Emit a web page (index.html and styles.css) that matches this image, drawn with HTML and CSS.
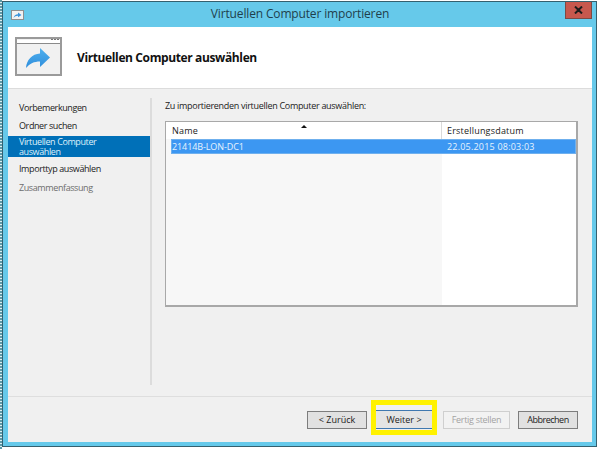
FILE: index.html
```html
<!DOCTYPE html>
<html lang="de">
<head>
<meta charset="utf-8">
<title>Virtuellen Computer importieren</title>
<link rel="stylesheet" href="styles.css">
</head>
<body>
<div class="desktop">
  <div class="window">
    <div class="titlebar">
      <svg class="title-icon" width="13" height="10" viewBox="0 0 13 10"><rect x="0.5" y="0.5" width="12" height="9" fill="#f2f2f2" stroke="#8f8f8f"/><path d="M2.500 8c.5-2.500 2-3.800 4.500-3.800V2.500L10.500 5 7 7.300V5.800C5 5.800 3.600 6.600 2.500 8z" fill="#3a94dc"/></svg>
      <span class="title-text">Virtuellen Computer importieren</span>
      <div class="close">
        <svg width="9" height="8" viewBox="0 0 9 8"><path d="M1 0.500 4.500 4M8 0.500 4.500 4M1 7.500 4.500 4M8 7.500 4.500 4" stroke="#1c1c1c" stroke-width="2"/></svg>
      </div>
    </div>
    <div class="client">
      <header class="header">
        <svg class="header-icon" width="47" height="39" viewBox="0 0 47 39">
          <defs><linearGradient id="arrow" x1="0" y1="0" x2="0" y2="1"><stop offset="0" stop-color="#4fb0ee"/><stop offset="1" stop-color="#2f8edc"/></linearGradient></defs>
          <rect x="1" y="1" width="45" height="37" fill="#f1f1f1" stroke="#9a9a9a" stroke-width="2"/>
          <rect x="2" y="3" width="43" height="3" fill="#fff"/>
          <path d="M2 6.500H45" stroke="#8a8a8a"/>
          <path d="M36 2.500h2M39 2.500h2M42 2.500h2" stroke="#777"/>
          <path d="M11 31C11.500 23 17 17 25 16.500V11L35 20.500 25 30V24.500C19 24.500 15 26.500 11 31z" fill="url(#arrow)"/>
        </svg>
        <h1 class="header-title">Virtuellen Computer auswählen</h1>
      </header>
      <div class="middle">
        <nav class="nav">
          <div class="nav-item">Vorbemerkungen</div>
          <div class="nav-item">Ordner suchen</div>
          <div class="nav-item nav-active">Virtuellen Computer auswählen</div>
          <div class="nav-item">Importtyp auswählen</div>
          <div class="nav-item nav-muted">Zusammenfassung</div>
        </nav>
        <main class="content">
          <p class="prompt">Zu importierenden virtuellen Computer auswählen:</p>
          <div class="list">
            <div class="list-head">
              <div class="col-name">Name<span class="sort"></span></div>
              <div class="col-date">Erstellungsdatum</div>
            </div>
            <div class="list-row">
              <div class="cell-name">21414B-LON-DC1</div>
              <div class="cell-date">22.05.2015 08:03:03</div>
            </div>
            <div class="list-fill">
              <div class="fill-name"></div>
              <div class="fill-date"></div>
            </div>
          </div>
        </main>
      </div>
      <footer class="footer">
        <button class="btn btn-back">&lt; Zurück</button>
        <div class="highlight"><button class="btn btn-next">Weiter &gt;</button></div>
        <button class="btn btn-disabled">Fertig stellen</button>
        <button class="btn btn-cancel">Abbrechen</button>
      </footer>
    </div>
  </div>
</div>
</body>
</html>
```
FILE: styles.css
```css
* { box-sizing: border-box; }
html, body { margin: 0; padding: 0; }
body { width: 600px; height: 449px; overflow: hidden; background: #fff; font-family: "Open Sans", "Noto Sans", sans-serif; }
.desktop { width: 600px; height: 449px; padding: 1px 3px 2px 2px; background: repeating-linear-gradient(180deg, #5d9aa8 0 2px, #dfeef2 2px 3px) left top / 2px 100% no-repeat #fff; }
.window { width: 595px; height: 446px; display: flex; flex-direction: column; background: #66c9ea; border: 1px solid #35606f; padding: 0 4px 4px 5px; }
.titlebar { height: 25px; display: flex; align-items: center; position: relative; flex: none; }
.title-icon { margin-left: 3px; flex: none; }
.title-text { position: absolute; left: 0; right: 0; top: 3px; text-align: center; font-size: 12px; line-height: 17px; letter-spacing: -0.15px; color: #1f3f4c; }
.close { position: absolute; right: 0; top: 0; width: 27px; height: 17px; background: #c7584e; border: 1px solid #7d4a44; border-top: 0; display: flex; align-items: center; justify-content: center; }
.client { flex: 1; display: flex; flex-direction: column; background: #f0f0f0; min-height: 0; }
.header { height: 62px; flex: none; display: flex; align-items: center; background: #fff; border-bottom: 1px solid #dcdcdc; padding: 0 0 2px 7px; }
.header-icon { flex: none; }
.header-title { margin: 2px 0 0 15px; font-size: 12px; font-weight: 700; letter-spacing: -0.38px; color: #111; line-height: 16px; }
.middle { height: 308px; flex: none; display: flex; border-bottom: 1px solid #dedede; }
.nav { width: 142px; flex: none; padding-top: 9px; font-size: 9px; letter-spacing: -0.4px; }
.nav-item { padding-left: 11px; height: 18px; line-height: 20px; color: #222; }
.nav-active { height: 21px; margin: 2px 0; padding: 1px 30px 0 11px; line-height: 10px; background: #0070b8; color: #dff0fb; }
.nav-muted { margin-top: 1px; color: #6d6d6d; }
.content { flex: 1; margin: 9px 0 11px; border-left: 2px solid #dcdcdc; padding: 1px 0 0 13px; min-width: 0; }
.prompt { margin: 0 0 9px; font-size: 9px; line-height: 13px; letter-spacing: -0.3px; color: #222; }
.list { width: 413px; height: 186px; background: #f7f7f7; border: 1px solid #a8a8a8; border-width: 1px 2px 2px 1px; display: flex; flex-direction: column; }
.list-head { height: 17px; flex: none; display: flex; font-size: 9px; line-height: 18px; letter-spacing: 0.2px; color: #222; background: #fff; padding-left: 5px; }
.col-name { width: 271px; padding-left: 1px; position: relative; border-right: 1px solid #dadada; }
.col-date { flex: 1; padding-left: 5px; }
.sort { position: absolute; left: 130px; top: 3px; width: 0; height: 0; border-left: 3px solid transparent; border-right: 3px solid transparent; border-bottom: 3px solid #111; }
.list-row { height: 15px; flex: none; display: flex; margin-left: 5px; background: #3c97f2; color: #e6f3fe; font-size: 9px; line-height: 14px; border: 1px solid #6fb0ee; }
.cell-name { width: 275px; letter-spacing: -0.1px; }
.cell-date { flex: 1; letter-spacing: 0.2px; }
.list-fill { flex: 1; display: flex; }
.fill-name { width: 276px; background: #f7f7f7; }
.fill-date { flex: 1; background: #fff; }
.footer { flex: 1; display: flex; align-items: flex-start; padding: 14px 0 0 299px; }
.btn { width: 60px; height: 18px; padding: 0; flex: none; font: inherit; font-size: 9px; line-height: 16px; color: #222; background: #e1e1e1; border: 1px solid #7d7d7d; }
.highlight { margin: -11px 0 0 4px; width: 66px; height: 35px; padding: 5px 0 1px; border: 5px solid #fff200; display: flex; flex: none; }
.btn-next { width: 56px; height: 19px; background: #e4e4e4; border: 0; border-top: 1px solid #3f78b0; border-bottom: 1px solid #3f78b0; }
.btn-disabled { width: 67px; margin-left: 6px; background: #f2f2f2; border-color: #cfcfcf; color: #a3a3a3; letter-spacing: -0.3px; }
.btn-cancel { margin-left: 8px; letter-spacing: -0.5px; }
```
